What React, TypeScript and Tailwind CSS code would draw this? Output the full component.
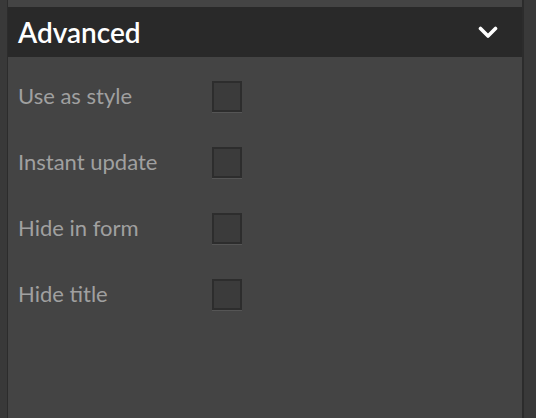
const options = ["Use as style", "Instant update", "Hide in form", "Hide title"];

function Checkbox() {
    return (
        <div className="w-[30px] h-[31px] border-2 border-[#2d2d2d] bg-[#3b3b3b] shadow-[0_1px_0_#555555]" />
    );
}

export default function App() {
    return (
        <div className="w-[536px] h-[418px] flex bg-[#393939] overflow-hidden" style={{ fontFamily: "Lato, 'Noto Sans', sans-serif" }}>
            <div className="w-[7px] shrink-0" />
            <div className="w-[517px] shrink-0 flex flex-col bg-[#444444] border-l border-r-2 border-[#2c2c2c]">
                <div className="h-[7px]" />
                <div className="h-[50px] bg-[#292929] flex items-center justify-between pl-[10px] pr-[24px]">
                    <span className="text-[28px] font-semibold text-white leading-none">Advanced</span>
                    <svg width="20" height="13" viewBox="0 0 20 13" fill="none" className="mt-[1px]">
                        <polyline points="2.5,2.5 10,10 17.5,2.5" stroke="white" strokeWidth="3.6" strokeLinecap="round" strokeLinejoin="round" />
                    </svg>
                </div>
                <div className="flex flex-col pt-[6px]">
                    {options.map((label) => (
                        <div key={label} className="h-[66px] flex items-center pl-[10px]">
                            <span className="w-[194px] text-[22px] text-[#a0a0a0] leading-none">{label}</span>
                            <Checkbox />
                        </div>
                    ))}
                </div>
            </div>
        </div>
    );
}
